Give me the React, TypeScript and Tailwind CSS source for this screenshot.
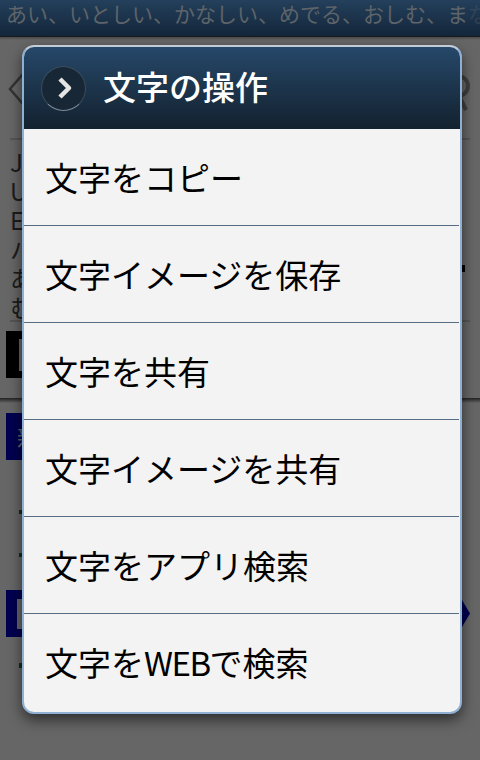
const menuItems = [
  '文字をコピー',
  '文字イメージを保存',
  '文字を共有',
  '文字イメージを共有',
  '文字をアプリ検索',
];

const fontClass = "[font-family:'Noto_Sans_CJK_JP','Noto_Sans',sans-serif]";

function BackgroundPage() {
  return (
    <div className="flex h-[760px] w-[480px] flex-col bg-[#666666]">
      <div className="h-[37px] shrink-0 overflow-hidden whitespace-nowrap border-b border-[#1a1a1a] bg-gradient-to-b from-[#24405c] to-[#13263a] pl-[6px] text-[21px] leading-[27px] text-[#5e6469]">
        あい、いとしい、かなしい、めでる、おしむ、ま<span className="opacity-30">な</span>
      </div>
      <div className="h-[3px] bg-gradient-to-b from-[#4a4a4a] to-[#666666]" />
      <div className="flex h-[98px] shrink-0 items-center justify-between pl-[8px] pr-[8px]">
        <svg width="16" height="34" viewBox="0 0 16 34">
          <path d="M15 2 L2 17 L15 32" fill="none" stroke="#333333" strokeWidth="2.5" />
        </svg>
        <svg width="14" height="50" viewBox="0 0 14 50">
          <circle cx="0" cy="22" r="10" fill="none" stroke="#3f3f3f" strokeWidth="4" />
          <path d="M2 34 L8 46" stroke="#3f3f3f" strokeWidth="4" />
        </svg>
      </div>
      <div className="mx-[10px] h-[2px] bg-[#555555]" />
      <div className="relative flex h-[180px] flex-col pl-[10px] pt-[7px] text-[24px] leading-[29px] text-[#1c1c1c]">
        <span>JI</span>
        <span>U</span>
        <span>E</span>
        <span>ハ</span>
        <span>あ</span>
        <span>む</span>
        <span className="absolute right-[15px] top-[125px] h-[7px] w-[3px] bg-black" />
      </div>
      <div className="mx-[10px] h-[2px] bg-[#555555]" />
      <div className="ml-[6px] mt-[9px] flex h-[47px] w-[30px] items-center bg-black pl-[13px]">
        <div className="h-[32px] w-[10px] bg-[#666666]" />
      </div>
      <div className="mt-[20px] h-[5px] bg-gradient-to-b from-[#222222] to-[#666666]" />
      <div className="ml-[6px] mt-[10px] flex h-[47px] w-[30px] items-center bg-[#000050] pl-[11px] text-[24px] leading-none text-[#666666]">
        新
      </div>
      <div className="relative mt-[130px] flex h-[47px] pl-[6px] pr-[10px]">
        <div className="flex w-full items-center bg-[#000050] pl-[11px] [clip-path:polygon(0_0,97%_0,100%_50%,97%_100%,0_100%)]">
          <div className="h-[30px] w-[10px] bg-[#666666]" />
        </div>
        <span className="absolute left-[19px] top-[-80px] h-[4px] w-[3px] bg-[#123012]" />
        <span className="absolute left-[19px] top-[-37px] h-[4px] w-[3px] bg-[#123012]" />
        <span className="absolute left-[19px] top-[73px] h-[5px] w-[3px] bg-[#123012]" />
      </div>
    </div>
  );
}

function MenuDialog() {
  return (
    <div className="absolute left-[22px] top-[45px] flex h-[669px] w-[440px] flex-col overflow-hidden rounded-[12px] border-2 border-[#8fb0d2] border-t-[#c2ccd6] bg-[#f3f3f3] shadow-[0_6px_14px_rgba(0,0,0,0.55)]">
      <div className="flex h-[82px] shrink-0 items-center gap-[17px] bg-gradient-to-b from-[#26486a] to-[#13222f] pl-[17px]">
        <div className="flex h-[45px] w-[45px] items-center justify-center rounded-full border border-[#3c4c5a] border-b-[#7f8c98] bg-[#182735]">
          <svg width="18" height="24" viewBox="0 0 18 24">
            <path d="M5 3 L14 12 L5 21" fill="none" stroke="#e4e4e4" strokeWidth="4.5" strokeLinejoin="round" />
          </svg>
        </div>
        <h2 className="mt-[-4px] text-[33px] font-medium leading-none text-white">文字の操作</h2>
      </div>
      <div className="flex flex-col">
        {menuItems.map((item) => (
          <div key={item} className="flex h-[97px] flex-col">
            <div className="flex flex-1 items-center pl-[21px] text-[33px] leading-none text-black">{item}</div>
            <div className="mr-[1px] h-px bg-[#566c82]" />
          </div>
        ))}
        <div className="flex h-[97px] items-center pl-[21px] text-[33px] leading-none text-black">
          文字を<span className="tracking-[-1.5px]">WEB</span>で検索
        </div>
      </div>
    </div>
  );
}

export default function App() {
  return (
    <div className={`relative h-[760px] w-[480px] overflow-hidden ${fontClass}`}>
      <BackgroundPage />
      <MenuDialog />
    </div>
  );
}
